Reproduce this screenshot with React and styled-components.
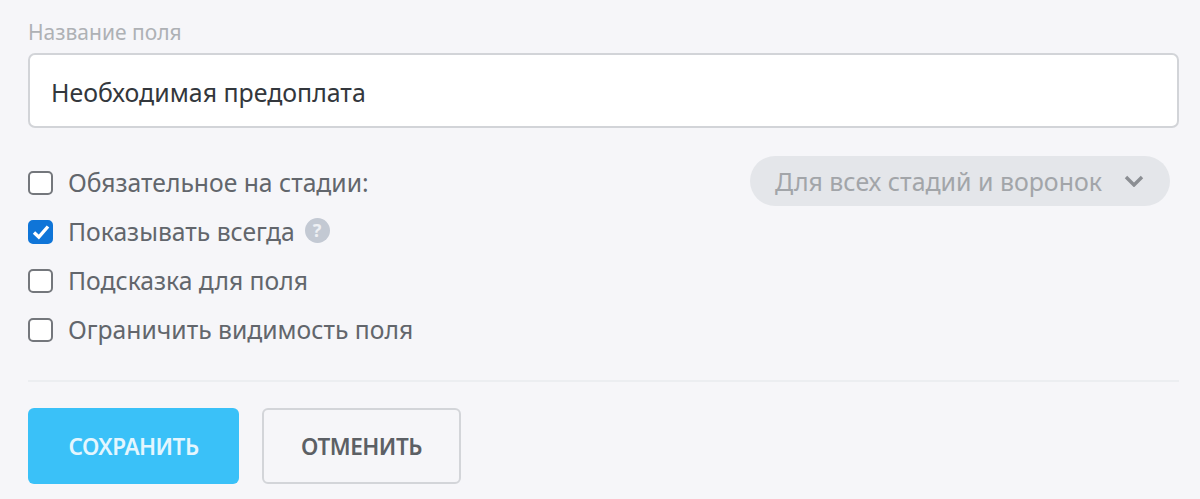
import React from "react"
import styled, { createGlobalStyle } from "styled-components"

const GlobalStyle = createGlobalStyle`
  html, body {
    margin: 0;
    height: 100%;
    background: #f6f6f9;
    overflow: hidden;
  }
`

const Form = styled.div`
  box-sizing: border-box;
  width: 1200px;
  height: 499px;
  padding: 21px 21px 0 28px;
  font-family: "Noto Sans", "Open Sans", sans-serif;
`

const FieldLabel = styled.div`
  color: #aeb1b5;
  font-size: 21px;
  line-height: 22px;
  margin-bottom: 10px;
`

const NameInput = styled.div`
  box-sizing: border-box;
  height: 75px;
  padding: 2px 21px 0;
  display: flex;
  align-items: center;
  background: #fff;
  border: 2px solid #d2d4d8;
  border-radius: 7px;
  color: #33373c;
  font-size: 24.9px;
`

const Options = styled.div`
  position: relative;
  margin-top: 30px;
  display: grid;
  grid-auto-rows: 49px;
`

const Row = styled.div`
  display: flex;
  align-items: center;
  gap: 15px;
  color: #62666c;
  font-size: 24.7px;
`

const Check = styled.span`
  box-sizing: border-box;
  width: 25px;
  height: 24px;
  display: flex;
  align-items: center;
  justify-content: center;
  border-radius: 5px;
  border: 2px solid ${props => (props.$checked ? "#0f75d8" : "#74777c")};
  background: ${props => (props.$checked ? "#0f75d8" : "#fff")};
`

const Help = styled.span`
  width: 25px;
  height: 25px;
  margin-left: -5px;
  margin-top: -3px;
  display: flex;
  align-items: center;
  justify-content: center;
  border-radius: 50%;
  background: #c3c9d3;
  color: #eef0f4;
  font-size: 18px;
  font-weight: 700;
`

const StageSelect = styled.div`
  position: absolute;
  top: -2px;
  right: 9px;
  box-sizing: border-box;
  width: 420px;
  height: 50px;
  padding: 0 26px 0 25px;
  display: flex;
  align-items: center;
  justify-content: space-between;
  border-radius: 25px;
  background: #e4e6ea;
  color: #a2a5a9;
  font-size: 24.9px;
`

const Divider = styled.div`
  height: 2px;
  margin-top: 26px;
  background: #eceef1;
`

const Actions = styled.div`
  margin-top: 26px;
  display: flex;
  gap: 23px;
`

const Button = styled.div`
  box-sizing: border-box;
  width: ${props => props.$width}px;
  height: 76px;
  display: flex;
  align-items: center;
  justify-content: center;
  border-radius: 6px;
  font-size: 22.5px;
  font-weight: 600;
  letter-spacing: -0.5px;
  color: ${props => (props.$primary ? "#e4f6fe" : "#5c6065")};
  background: ${props => (props.$primary ? "#3ac1f8" : "transparent")};
  border: ${props => (props.$primary ? "none" : "2px solid #d3d5d9")};
`

const options = [
  { label: "Обязательное на стадии:" },
  { label: "Показывать всегда", checked: true, help: true },
  { label: "Подсказка для поля" },
  { label: "Ограничить видимость поля" },
]

const App = () => (
  <>
    <GlobalStyle />
    <Form>
      <FieldLabel>Название поля</FieldLabel>
      <NameInput>Необходимая предоплата</NameInput>
      <Options>
        {options.map(option => (
          <Row key={option.label}>
            <Check $checked={option.checked}>
              {option.checked && (
                <svg width="18" height="16" viewBox="0 0 18 16" fill="none">
                  <path d="M2 8.5L6.8 13L16 2.5" stroke="#fff" strokeWidth="3.4" />
                </svg>
              )}
            </Check>
            {option.label}
            {option.help && <Help>?</Help>}
          </Row>
        ))}
        <StageSelect>
          Для всех стадий и воронок
          <svg width="20" height="12" viewBox="0 0 20 12" fill="none">
            <path d="M2 2L10 10L18 2" stroke="#8b8e93" strokeWidth="3.4" />
          </svg>
        </StageSelect>
      </Options>
      <Divider />
      <Actions>
        <Button $primary $width={211}>СОХРАНИТЬ</Button>
        <Button $width={199}>ОТМЕНИТЬ</Button>
      </Actions>
    </Form>
  </>
)

export default App
